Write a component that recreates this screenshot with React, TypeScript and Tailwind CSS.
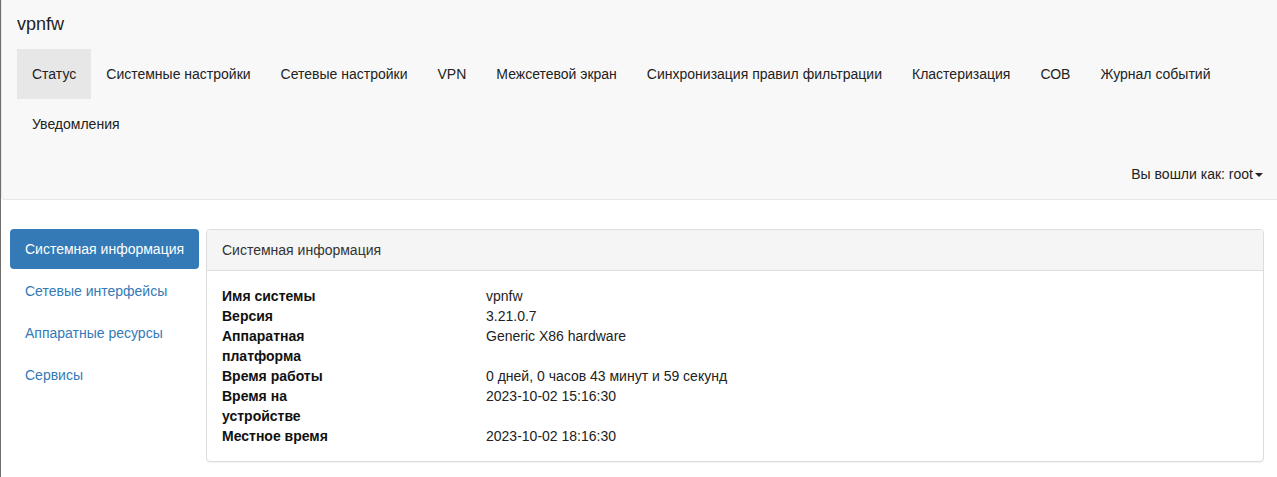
import React from "react";

const navItems = [
  "Статус",
  "Системные настройки",
  "Сетевые настройки",
  "VPN",
  "Межсетевой экран",
  "Синхронизация правил фильтрации",
  "Кластеризация",
  "СОВ",
  "Журнал событий",
  "Уведомления",
];

const sideItems = ["Системная информация", "Сетевые интерфейсы", "Аппаратные ресурсы", "Сервисы"];

const rows: [string, string][] = [
  ["Имя системы", "vpnfw"],
  ["Версия", "3.21.0.7"],
  ["Аппаратная платформа", "Generic X86 hardware"],
  ["Время работы", "0 дней, 0 часов 43 минут и 59 секунд"],
  ["Время на устройстве", "2023-10-02 15:16:30"],
  ["Местное время", "2023-10-02 18:16:30"],
];

export default function App() {
  return (
    <div
      className="min-h-[477px] w-[1277px] overflow-hidden border-l border-[#6e6e6e] bg-white text-[14px] leading-[20px] text-[#333]"
      style={{ fontFamily: '"Liberation Sans", Arial, sans-serif' }}
    >
      <div className="w-[1290px] rounded-bl-[4px] border-b border-l border-[#e7e7e7] bg-[#f8f8f8]">
        <div className="h-[49px] pl-[15px] pt-[14px] text-[18px] leading-[20px] text-[#222]">vpnfw</div>
        <ul className="flex w-[1262px] flex-wrap pl-[15px]">
          {navItems.map((n, i) => (
            <li
              key={n}
              className={
                "px-[15px] py-[15px] text-[#222] " + (i === 0 ? "bg-[#e7e7e7]" : "")
              }
            >
              {n}
            </li>
          ))}
        </ul>
        <div className="flex h-[50px] w-[1276px] items-center justify-end pr-[15px] text-[#222]">
          <span>Вы вошли как: root</span>
          <span className="ml-[2px] mt-[1px] inline-block h-0 w-0 border-x-[4px] border-t-[4px] border-x-transparent border-t-[#222]" />
        </div>
      </div>

      <div className="mt-[29px] flex gap-[7px] pl-[9px] pr-[13px]">
        <ul className="flex w-[189px] shrink-0 flex-col gap-[2px]">
          {sideItems.map((s, i) => (
            <li
              key={s}
              className={
                "rounded-[4px] px-[15px] py-[10px] whitespace-nowrap " +
                (i === 0 ? "bg-[#337ab7] text-white" : "text-[#337ab7]")
              }
            >
              {s}
            </li>
          ))}
        </ul>
        <div className="flex-1 rounded-[4px] border border-[#ddd] bg-white shadow-[0_1px_1px_rgba(0,0,0,0.05)]">
          <div className="rounded-t-[3px] border-b border-[#ddd] bg-[#f5f5f5] px-[15px] py-[10px]">
            Системная информация
          </div>
          <div className="grid grid-cols-[264px_1fr] p-[15px]">
            {rows.map(([k, v]) => (
              <React.Fragment key={k}>
                <div className="max-w-[118px] font-bold text-[#111]">{k}</div>
                <div className="text-[#222]">{v}</div>
              </React.Fragment>
            ))}
          </div>
        </div>
      </div>
    </div>
  );
}
